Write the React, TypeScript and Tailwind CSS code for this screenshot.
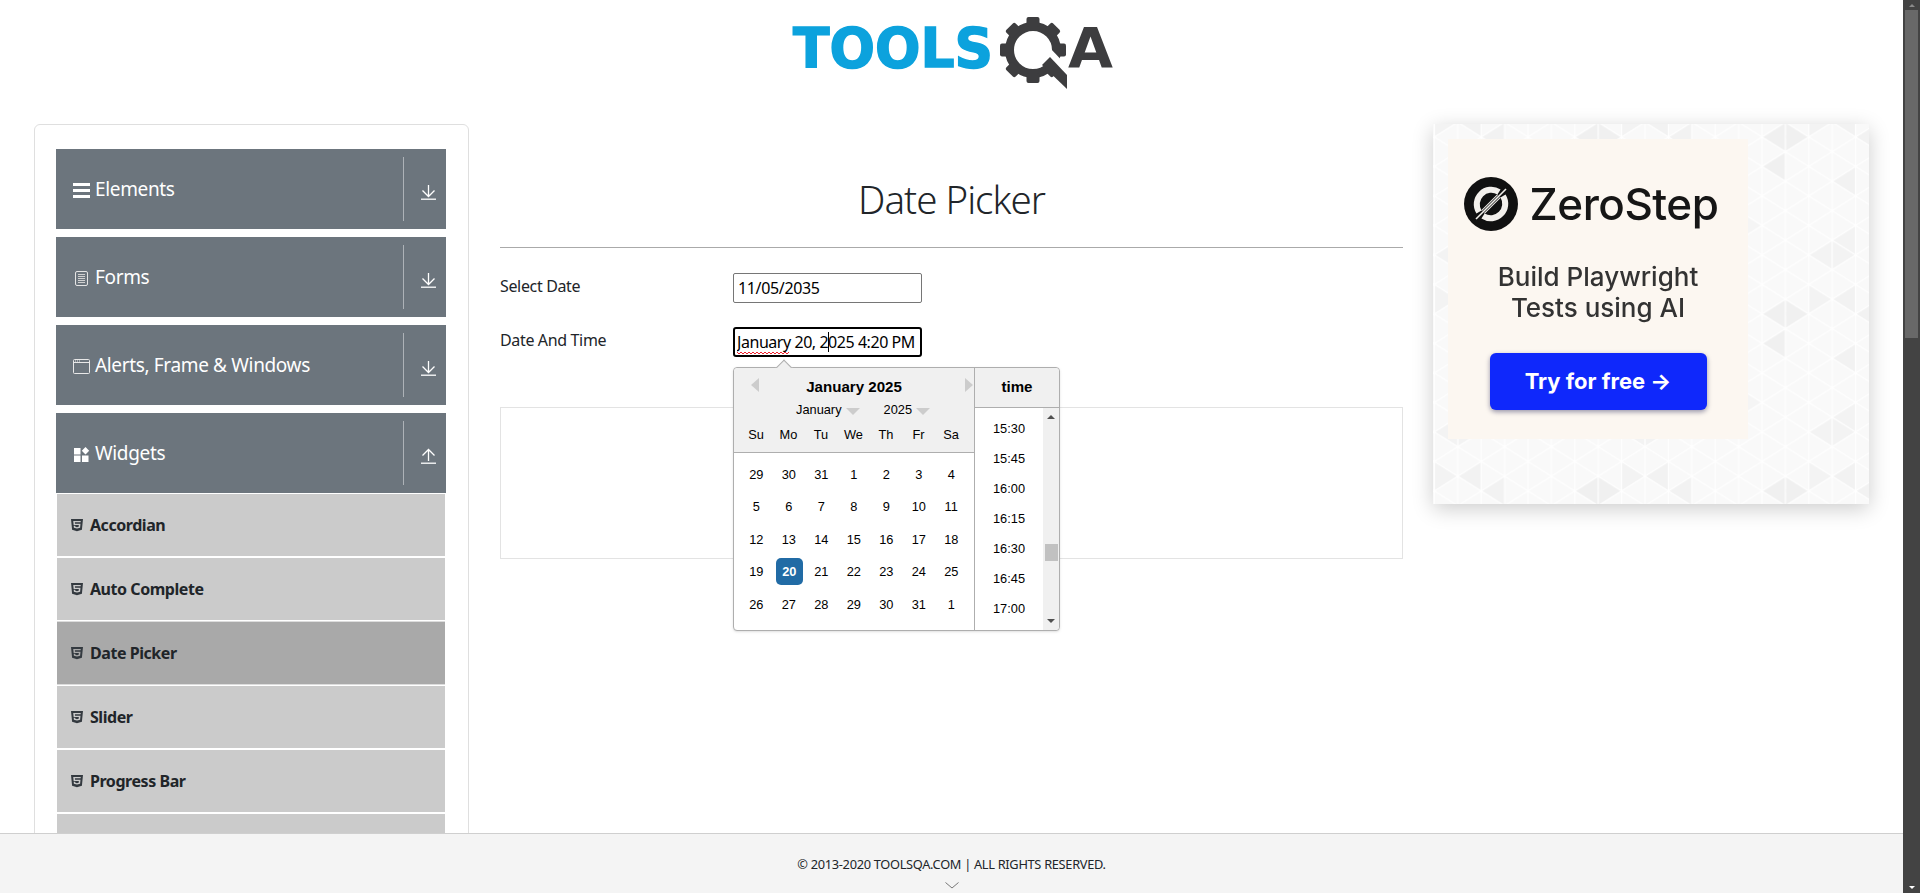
import React from 'react';
import { FaHtml5 } from 'react-icons/fa';

const segoe = 'font-["Noto_Sans",sans-serif]';

const groups = [
    { name: 'Elements', icon: 'bars' },
    { name: 'Forms', icon: 'form' },
    { name: 'Alerts, Frame & Windows', icon: 'window' },
    { name: 'Widgets', icon: 'widgets', open: true },
];

const items = ['Accordian', 'Auto Complete', 'Date Picker', 'Slider', 'Progress Bar', 'Tabs'];

const dayNames = ['Su', 'Mo', 'Tu', 'We', 'Th', 'Fr', 'Sa'];

const days = [
    29, 30, 31, 1, 2, 3, 4,
    5, 6, 7, 8, 9, 10, 11,
    12, 13, 14, 15, 16, 17, 18,
    19, 20, 21, 22, 23, 24, 25,
    26, 27, 28, 29, 30, 31, 1,
];

const times = ['15:30', '15:45', '16:00', '16:15', '16:30', '16:45', '17:00'];

function GroupIcon({ kind }: { kind: string }) {
    if (kind === 'bars') {
        return (
            <svg width="17" height="15" viewBox="0 0 17 15" fill="#fff">
                <rect x="0" y="0" width="17" height="3" />
                <rect x="0" y="6" width="17" height="3" />
                <rect x="0" y="12" width="17" height="3" />
            </svg>
        );
    }
    if (kind === 'form') {
        return (
            <svg width="17" height="15" viewBox="0 0 17 15" fill="none" stroke="#e4e4e4">
                <rect x="2.5" y="0.5" width="12" height="14" rx="1.5" />
                <path d="M5 3.5h7M5 5.5h7M5 7.5h7M5 9.5h7M5 11.5h7" stroke="#d0d0d0" />
            </svg>
        );
    }
    if (kind === 'window') {
        return (
            <svg width="17" height="15" viewBox="0 0 17 15" fill="none" stroke="#e8e8e8">
                <rect x="0.5" y="0.5" width="16" height="14" rx="1" />
                <path d="M1 3.5h15" />
                <path d="M2 2h1M4 2h1M6 2h1" />
            </svg>
        );
    }
    return (
        <svg width="17" height="15" viewBox="0 0 17 15" fill="#fff">
            <rect x="1" y="1" width="6.5" height="6.5" />
            <rect x="1" y="8.5" width="6.5" height="6.5" />
            <rect x="9" y="8.5" width="6.5" height="6.5" />
            <path d="M12.5 0l3.7 3.7-3.7 3.7-3.7-3.7z" />
        </svg>
    );
}

function ArrowIcon({ up }: { up?: boolean }) {
    return (
        <svg width="15" height="16" viewBox="0 0 15 16" fill="none" stroke="#fff" strokeWidth="1.3">
            {up ? (
                <path d="M7.5 13V1.5M1.5 7.5l6-6 6 6" />
            ) : (
                <path d="M7.5 1v11.5M1.5 6.5l6 6 6-6" />
            )}
            <path d="M0 15.2h15" />
        </svg>
    );
}

function Logo() {
    const teeth = [0, 45, 90, 135, 180, 225, 270, 315];
    return (
        <svg width="322" height="74" viewBox="0 0 322 74">
            <text
                x="1"
                y="50"
                fontFamily='"DejaVu Sans", sans-serif'
                fontWeight="700"
                fontSize="55"
                fill="#0ca2dd"
                stroke="#0ca2dd"
                strokeWidth="1.5"
                textLength="200"
                lengthAdjust="spacingAndGlyphs"
            >
                TOOLS
            </text>
            <g transform="translate(241 33)" fill="#3d3d3f">
                <circle r="23.5" fill="none" stroke="#3d3d3f" strokeWidth="9" />
                {teeth.map(a => (
                    <rect key={a} x="-6.5" y="-33" width="13" height="10" rx="2" transform={`rotate(${a})`} />
                ))}
            </g>
            <path d="M250 36l9 -4 17 18v22z" fill="#fff" />
            <path d="M258 40l17 18v14l-25-24z" fill="#3d3d3f" />
            <text
                x="276"
                y="50"
                fontFamily='"DejaVu Sans", sans-serif'
                fontWeight="700"
                fontSize="55"
                fill="#3d3d3f"
                textLength="45"
                lengthAdjust="spacingAndGlyphs"
            >
                A
            </text>
        </svg>
    );
}

function Sidebar() {
    return (
        <div className="w-[435px] shrink-0 border border-[#dfdfdf] rounded-md pl-[21px] pr-[22px] pt-[24px]">
            <div className="flex flex-col gap-2">
                {groups.map(group => (
                    <div key={group.name} className="flex h-20 items-center bg-[#6c757d] text-white">
                        <div className="flex-1 flex items-center pl-[17px] -mt-[1px]">
                            <span className="w-[22px] mt-[4px] flex">
                                <GroupIcon kind={group.icon} />
                            </span>
                            <span className="text-[19px] leading-[24px] tracking-[-0.35px]">{group.name}</span>
                        </div>
                        <div className="w-px h-16 bg-[#adb2b7]" />
                        <div className="w-[42px] flex justify-center pl-[6px] pt-[5px]">
                            <ArrowIcon up={group.open} />
                        </div>
                    </div>
                ))}
            </div>
            <div className="flex flex-col mx-px">
                {items.map(item => (
                    <div
                        key={item}
                        className={`flex h-[64px] items-center pl-[14px] border-y border-white text-[#212529] font-bold text-[16px] tracking-[-0.45px] ${
                            item === 'Date Picker' ? 'bg-[#a9a9a9] !border-[#dcdcdc]' : 'bg-[#cbcbcb]'
                        }`}
                    >
                        <FaHtml5 preserveAspectRatio="none" className="w-[12px] h-[14px] text-[#343a40] mr-[7px]" />
                        {item}
                    </div>
                ))}
            </div>
        </div>
    );
}

function DatePopup() {
    return (
        <div className='absolute left-0 top-[40px] w-[327px] h-[264px] flex bg-white border border-[#aeaeae] rounded shadow-sm font-["Liberation_Sans",sans-serif] text-black z-10'>
            <div className="absolute left-[44px] -top-[6px] w-[12px] h-[12px] rotate-45 bg-[#f0f0f0] border-l border-t border-[#aeaeae]" />

            {/* calendar */}
            <div className="relative w-[241px] shrink-0 border-r border-[#aeaeae]">
                <div className="relative h-[85px] bg-[#f0f0f0] border-b border-[#aeaeae] rounded-tl flex flex-col items-center pt-[10px]">
                    <div className="absolute left-[17px] top-[10px] w-0 h-0 border-y-[7px] border-y-transparent border-r-[8px] border-r-[#ccc]" />
                    <div className="absolute right-[1px] top-[10px] w-0 h-0 border-y-[7px] border-y-transparent border-l-[8px] border-l-[#ccc]" />
                    <div className="text-[15.1px] leading-[18px] font-bold">January 2025</div>
                    <div className="flex items-center gap-[24px] mt-[6px] pl-[18px] text-[12.8px] leading-[16px]">
                        <div className="flex items-center gap-[4px]">
                            January
                            <span className="w-0 h-0 mt-[3px] border-x-[7px] border-x-transparent border-t-[7px] border-t-[#ccc]" />
                        </div>
                        <div className="flex items-center gap-[4px]">
                            2025
                            <span className="w-0 h-0 mt-[3px] border-x-[7px] border-x-transparent border-t-[7px] border-t-[#ccc]" />
                        </div>
                    </div>
                    <div className="grid grid-cols-7 w-[227.5px] mt-[9px] -ml-px text-[12.8px] leading-[16px] text-center">
                        {dayNames.map(d => (
                            <div key={d}>{d}</div>
                        ))}
                    </div>
                </div>
                <div className="grid grid-cols-7 w-[227.5px] ml-[6px] mt-[5px] text-[12.8px] text-center">
                    {days.map((d, i) => (
                        <div key={i} className="h-[32.5px] flex items-center justify-center">
                            {i === 22 ? (
                                <span className="w-[27px] h-[27px] ml-px rounded-[5px] bg-[#216ba5] text-white font-bold flex items-center justify-center">
                                    {d}
                                </span>
                            ) : (
                                d
                            )}
                        </div>
                    ))}
                </div>
            </div>

            {/* time */}
            <div className="flex-1 flex flex-col">
                <div className="h-[40px] bg-[#f0f0f0] border-b border-[#aeaeae] rounded-tr flex items-center justify-center text-[15.1px] font-bold">
                    time
                </div>
                <div className="flex flex-1">
                    <div className="flex-1 pt-[6px] text-[12.8px] text-center">
                        {times.map(t => (
                            <div key={t} className="h-[30px] leading-[30px]">{t}</div>
                        ))}
                    </div>
                    <div className="w-[16px] bg-[#f0f0f0] flex flex-col items-center pt-[7px] rounded-br">
                        <span className="w-0 h-0 border-x-[4px] border-x-transparent border-b-[4px] border-b-[#505050]" />
                        <span className="w-[13px] h-[17px] bg-[#c1c1c1] mt-[125px]" />
                        <span className="w-0 h-0 mt-[58px] border-x-[4px] border-x-transparent border-t-[4px] border-t-[#505050]" />
                    </div>
                </div>
            </div>
        </div>
    );
}

function MainColumn() {
    return (
        <div className={`w-[903px] shrink-0 ml-[31px] text-[#212529] ${segoe}`}>
            <div className="pt-[45px] pb-[18px] border-b border-[#aaaaaa] text-center">
                <h1 className="text-[38.5px] leading-[60px] font-light tracking-[-1px]">Date Picker</h1>
            </div>
            <div className="flex mt-[25px]">
                <label className="w-[233px] pt-px text-[16px] leading-[24px] tracking-[-0.35px]">Select Date</label>
                <input
                    readOnly
                    value="11/05/2035"
                    className="w-[189px] h-[30px] px-[4px] border border-[#767676] rounded-[2px] text-[16px] tracking-[-0.35px] text-black"
                />
            </div>
            <div className="flex mt-[24px]">
                <label className="w-[233px] pt-px text-[16px] leading-[24px] tracking-[-0.35px]">Date And Time</label>
                <div className="relative w-[189px] h-[30px]">
                    <input
                        readOnly
                        value="January 20, 2025 4:20 PM"
                        className="w-full h-full pl-[2px] pr-0 border-2 border-black rounded-[3px] text-[16px] tracking-[-0.45px] text-black outline-none"
                    />
                    <svg className="absolute left-[4px] top-[24px]" width="54" height="4" viewBox="0 0 54 4" fill="none" stroke="#f0222e">
                        <path d="M0 1l2 2 2-2 2 2 2-2 2 2 2-2 2 2 2-2 2 2 2-2 2 2 2-2 2 2 2-2 2 2 2-2 2 2 2-2 2 2 2-2 2 2 2-2 2 2 2-2 2 2 2-2" />
                    </svg>
                    <div className="absolute left-[95px] top-[5px] w-px h-[20px] bg-black" />
                    <DatePopup />
                </div>
            </div>
            <div className="h-[152px] mt-[50px] border border-[#e3e3e3]" />
        </div>
    );
}

// triangular lattice behind the ad, one tile is 8 columns by 6 rows
function latticePath() {
    const dx = 23.4;
    const dy = 29.5;
    let d = '';
    for (let c = 0; c <= 8; c++) {
        d += `M${c * dx} 0V${6 * dy}`;
    }
    for (let r = -8; r <= 14; r++) {
        const y = r * dy;
        d += `M0 ${y}L${8 * dx} ${y + 4 * dy}`;
        d += `M0 ${y}L${8 * dx} ${y - 4 * dy}`;
    }
    return d;
}

function AdPattern() {
    return (
        <svg className="absolute inset-0 blur-[0.5px]" width="436" height="380">
            <defs>
                <pattern id="tri" width="187.2" height="177" patternUnits="userSpaceOnUse" x="-22" y="-1.75">
                    <rect width="187.2" height="177" fill="#f9f9f9" />
                    <g fill="#f0f0f0">
                        <path d="M0 0v29.5l23.4-14.75zM187.2 0v29.5L163.8 14.75zM187.2 29.5V59l-23.4-14.75z" />
                        <path d="M70.2 44.25v29.5L46.8 59z" fill="#f2f2f2" />
                        <path d="M46.8 118v29.5L23.4 132.75zM46.8 118v29.5L70.2 132.75z" fill="#f3f3f3" />
                        <path d="M70.2 103.25v29.5L46.8 118z" fill="#f3f3f3" />
                        <path d="M93.6 0v29.5L70.2 14.75zM70.2 0v14.75L46.8 0zM70.2 162.25V177H46.8z" fill="#f2f2f2" />
                        <path d="M23.4 0v14.75L46.8 0zM23.4 162.25V177h23.4z" fill="#f3f3f3" />
                        <path d="M140.4 88.5v29.5l23.4-14.75zM117 73.75v29.5L93.6 88.5z" fill="#f5f5f5" />
                    </g>
                    <path d={latticePath()} fill="none" stroke="#ffffff" strokeWidth="1.2" />
                </pattern>
            </defs>
            <rect width="436" height="380" fill="url(#tri)" />
        </svg>
    );
}

function Ad() {
    return (
        <div className='relative w-[436px] h-[380px] shrink-0 ml-[30px] p-[15px] shadow-[0_5px_20px_rgba(0,0,0,0.2)] font-["Inter",sans-serif]'>
            <AdPattern />
            <div className="relative w-[300px] h-[300px] bg-[#fcf7f1] flex flex-col items-center">
                <div className="flex items-center gap-[12px] mt-[38px] -ml-[14px] blur-[0.3px]">
                    <svg width="54" height="54" viewBox="0 0 54 54">
                        <circle cx="27" cy="27" r="27" fill="#111" />
                        <path
                            d="M35 15a14.5 14.5 0 0 0-20 20M19 39a14.5 14.5 0 0 0 20-20"
                            fill="none"
                            stroke="#f3f0ec"
                            strokeWidth="6"
                        />
                        <path d="M19 35L35 19" stroke="#f3f0ec" strokeWidth="5" />
                        <path d="M16 38L38 16" stroke="#111" strokeWidth="3" />
                        <path d="M12 42L42 12" stroke="#f3f0ec" strokeWidth="1.6" />
                    </svg>
                    <span className="text-[44px] leading-[54px] font-medium text-[#161616] tracking-[-0.5px]">ZeroStep</span>
                </div>
                <div className="mt-[30px] text-[26px] leading-[31px] font-medium text-center text-[#333] blur-[0.3px]">
                    Build Playwright
                    <br />
                    Tests using AI
                </div>
                <div className="w-[217px] h-[57px] mt-[30px] rounded-md bg-[#0f28fb] text-white text-[22px] font-bold flex items-center justify-center shadow-[0_2px_5px_rgba(0,0,60,0.4)]">
                    Try for free →
                </div>
            </div>
        </div>
    );
}

function PageScrollbar() {
    return (
        <div className="w-[17px] shrink-0 bg-[#434343] flex flex-col items-center">
            <span className="w-0 h-0 mt-[4px] border-x-[3.5px] border-x-transparent border-b-[3px] border-b-[#8a8a8a]" />
            <span className="w-[13px] h-[328px] mt-[3px] bg-[#686868]" />
            <span className="w-0 h-0 mt-auto mb-[4px] border-x-[3.5px] border-x-transparent border-t-[3px] border-t-white" />
        </div>
    );
}

export default function App() {
    return (
        <div className={`relative flex h-[893px] overflow-hidden bg-white ${segoe}`}>
            <div className="relative w-[1903px] shrink-0 overflow-hidden">
                <div className="h-[124px] flex justify-center pt-[17px] pl-[2px]">
                    <Logo />
                </div>
                <div className="flex items-start pl-[34px]">
                    <Sidebar />
                    <MainColumn />
                    <Ad />
                </div>

                {/* footer sits over the page */}
                <div className="absolute left-0 right-0 bottom-0 h-[60px] z-20 bg-[#f4f4f4] border-t border-[#cfcfcf] flex flex-col items-center pt-[20px] text-[#212529]">
                    <div className="text-[12.8px] leading-[21px] tracking-[-0.3px]">© 2013-2020 TOOLSQA.COM | ALL RIGHTS RESERVED.</div>
                    <svg className="mt-[7px]" width="14" height="7" viewBox="0 0 14 7" fill="none" stroke="#777">
                        <path d="M0.5 0.5L7 6L13.5 0.5" />
                    </svg>
                </div>
            </div>
            <PageScrollbar />
        </div>
    );
}
